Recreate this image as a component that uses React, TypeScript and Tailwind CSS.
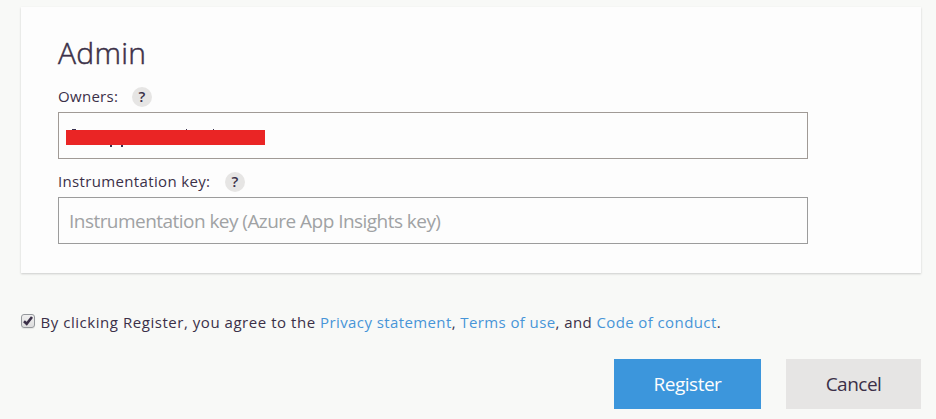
import React from "react";

function Help() {
  return (
    <span className="flex h-5 w-5 items-center justify-center rounded-full bg-[#e6e5e4] pb-px text-[15px] font-semibold leading-none text-[#3a3048]">
      ?
    </span>
  );
}

function Remnant({ className }: { className: string }) {
  return <i className={"absolute bg-[#3b3150] " + className} />;
}

export default function App() {
  return (
    <main className="h-[419px] w-[936px] overflow-hidden bg-[#f8f9f7] pl-[21px] pt-[7px] font-['Open_Sans','Noto_Sans',sans-serif] text-[#3b3048]">
      <section className="h-[266px] w-[900px] bg-[#fdfdfd] px-[37px] pt-[26px] shadow-[0_1px_2px_rgba(0,0,0,0.18)]">
        <h1 className="h-[40px] text-[30px] font-light leading-[40px] tracking-[0.3px] [-webkit-text-stroke:0.5px_#3b3048]">Admin</h1>
        <div className="mt-[14px] flex h-5 items-center gap-[14px] text-[15px]">
          <label className="-mt-[2px] w-[60px] whitespace-nowrap tracking-[0.3px]">Owners:</label>
          <Help />
        </div>
        <div className="relative mt-[5px] h-[47px] w-[750px] border border-[#a09a96] bg-[#fdfdfd]">
          <Remnant className="left-[13px] top-[16px] h-px w-[4px]" />
          <Remnant className="left-[127px] top-[16px] h-px w-px" />
          <Remnant className="left-[154px] top-[16px] h-px w-px" />
          <Remnant className="left-[51px] top-[32px] h-[2px] w-[2px]" />
          <Remnant className="left-[62px] top-[32px] h-[2px] w-[2px]" />
          <div className="absolute left-[7px] top-[17px] h-[15px] w-[199px] bg-[#ea2525]" />
        </div>
        <div className="mt-[13px] flex h-5 items-center gap-[14px] text-[15px]">
          <label className="-mt-[2px] w-[153px] whitespace-nowrap tracking-[0.35px]">Instrumentation key:</label>
          <Help />
        </div>
        <div className="mt-[5px] flex h-[47px] w-[750px] items-center border border-[#9c9c9c] bg-[#fdfdfd] pl-[10px] pt-px text-[19px] tracking-[-0.54px] text-[#a0a2a4]">
          <span className="whitespace-nowrap">Instrumentation key (Azure App Insights key)</span>
        </div>
      </section>
      <div className="mt-[37px] flex h-6 items-center text-[15px]">
        <span className="mt-[-2px] flex h-[14px] w-[14px] items-center justify-center rounded-[3px] border border-[#94989c] bg-gradient-to-b from-[#f0f0f0] to-[#dddddd] shadow-[0_1px_1px_rgba(0,0,0,0.08)]">
          <svg width="10" height="10" viewBox="0 0 10 10" fill="none" stroke="#3b3048" strokeWidth="2.6">
            <path d="M1 5.3 L3.7 7.8 L9 1" />
          </svg>
        </span>
        <p className="ml-[5.5px] whitespace-nowrap tracking-[0.4px]">
          <span className="tracking-[0.54px]">By clicking Register, you agree to the </span>
          <a className="text-[#4795d8]">Privacy statement</a>,{" "}
          <a className="text-[#4795d8]">Terms of use</a>, and <a className="text-[#4795d8]">Code of conduct</a>.
        </p>
      </div>
      <div className="mt-[25px] flex w-[900px] justify-end gap-[25px] text-[19px] tracking-[-0.5px]">
        <button className="h-[50px] w-[147px] bg-[#3c96dc] text-[#fdfdfd]">Register</button>
        <button className="h-[50px] w-[135px] bg-[#e6e5e4]">Cancel</button>
      </div>
    </main>
  );
}
